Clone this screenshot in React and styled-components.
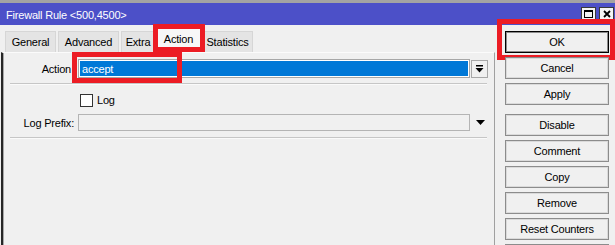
import styled, { createGlobalStyle } from 'styled-components';

const GlobalStyle = createGlobalStyle`
  html, body {
    margin: 0;
    padding: 0;
    background: #f0f0f0;
  }
  body {
    font-family: "Liberation Sans", Arial, sans-serif;
    font-size: 11px;
    letter-spacing: -0.2px;
    color: #000;
  }
`;

const markRed = '#ec1c24';

const Window = styled.div`
  width: 615px;
  height: 245px;
  overflow: hidden;
  display: flex;
  flex-direction: column;
  background: #f0f0f0;
  border-top: 3px solid #a3a3a3;
  box-sizing: border-box;
`;

const TitleBar = styled.div`
  height: 22px;
  flex-shrink: 0;
  display: flex;
  align-items: center;
  justify-content: space-between;
  padding: 0 1px 0 6px;
  background: #4c50c8;
  color: #fff;
`;

const Title = styled.div`
  font-size: 11px;
  padding-top: 2px;
`;

const Controls = styled.div`
  display: flex;
  gap: 3px;
  align-self: flex-start;
  margin-top: 4px;
`;

const CtlButton = styled.div`
  width: 13px;
  height: 12px;
  display: flex;
  align-items: center;
  justify-content: center;
  background: #f4f4f4;
  border: 1px solid #3a3a3a;
`;

const Body = styled.div`
  flex: 1;
  display: flex;
  padding-left: 1px;
  min-height: 0;
`;

const Main = styled.div`
  width: 494px;
  display: flex;
  flex-direction: column;
`;

const TabStrip = styled.div`
  height: 27px;
  flex-shrink: 0;
  display: flex;
  align-items: flex-end;
  gap: 2px;
  padding-left: 4px;
`;

const Tab = styled.div`
  position: relative;
  box-sizing: border-box;
  width: ${(p) => p.$w}px;
  height: ${(p) => (p.$active ? 25 : 21)}px;
  margin: ${(p) => (p.$active ? '0 -2px' : '0')};
  z-index: ${(p) => (p.$active ? 2 : 1)};
  display: flex;
  align-items: center;
  justify-content: center;
  padding-bottom: ${(p) => (p.$active ? 3 : 0)}px;
  background: ${(p) => (p.$active ? '#f7f7f7' : '#e4e4e4')};
  border: 1px solid #d6d6d6;
  border-bottom: none;

  ${(p) =>
    p.$marked &&
    `
    &::after {
      content: '';
      position: absolute;
      top: -4px;
      left: -3px;
      right: -4px;
      bottom: 0;
      border: 5px solid ${markRed};
      pointer-events: none;
    }
  `}
`;

const Panel = styled.div`
  flex: 1;
  display: flex;
  flex-direction: column;
  padding-top: 6px;
  border-top: 1px solid #fbfbfb;
  border-left: 2px solid #262626;
  border-right: 1px solid #a0a0a0;
  box-shadow: inset 1px 0 0 #a8a8a8;
`;

const Row = styled.div`
  display: flex;
  align-items: center;
  height: ${(p) => p.$h}px;
  margin-top: ${(p) => p.$mt || 0}px;
`;

const Label = styled.div`
  width: 71px;
  flex-shrink: 0;
  text-align: right;
  padding-right: ${(p) => p.$pr || 0}px;
  box-sizing: border-box;
  margin-right: 4px;
  white-space: nowrap;
`;

const SelectBox = styled.div`
  position: relative;
  box-sizing: border-box;
  width: 392px;
  height: 19px;
  padding: 1px;
  background: #fff;
  border: 1px solid #a7a7a7;

  &::after {
    content: '';
    position: absolute;
    top: -8px;
    left: -7px;
    width: 110px;
    height: 31px;
    box-sizing: border-box;
    border: 5px solid ${markRed};
    pointer-events: none;
  }
`;

const Selected = styled.div`
  height: 100%;
  display: flex;
  align-items: center;
  padding-left: 2px;
  background: #0078d7;
  color: #fff;
  font-size: 11px;
`;

const DropButton = styled.div`
  box-sizing: border-box;
  width: 17px;
  height: 18px;
  margin-left: 1px;
  display: flex;
  align-items: center;
  justify-content: center;
  background: #f0f0f0;
  border: 1px solid #a7a7a7;
`;

const TextInput = styled.div`
  box-sizing: border-box;
  width: 392px;
  height: 17px;
  background: #f0f0f0;
  border: 1px solid #b4b4b4;
`;

const Arrow = styled.div`
  margin-left: 6px;
  display: flex;
`;

const Separator = styled.div`
  height: 1px;
  margin: ${(p) => p.$mt}px 7px 0 7px;
  background: #c6c6c6;
  border-bottom: 1px solid #fafafa;
`;

const Check = styled.div`
  box-sizing: border-box;
  width: 13px;
  height: 13px;
  margin-left: 2px;
  background: #fff;
  border: 1px solid #333;
`;

const CheckLabel = styled.span`
  margin-left: 4px;
`;

const Side = styled.div`
  flex: 1;
  display: flex;
  flex-direction: column;
  gap: 4px;
  padding: 6px 6px 0 10px;
`;

const Button = styled.div`
  position: relative;
  box-sizing: border-box;
  flex-shrink: 0;
  height: 22px;
  margin-top: ${(p) => p.$mt || 0}px;
  display: flex;
  align-items: center;
  justify-content: center;
  background: #f0f0f0;
  border: 1px solid ${(p) => (p.$default ? '#000' : '#8c8c8c')};
  box-shadow: inset 0 0 0 1px ${(p) => (p.$default ? '#8c8c8c' : '#dadada')};

  ${(p) =>
    p.$marked &&
    `
    &::after {
      content: '';
      position: absolute;
      top: -13px;
      left: -9px;
      right: -7px;
      bottom: -8px;
      border: 5px solid ${markRed};
      pointer-events: none;
    }
  `}
`;

const tabs = [
  { name: 'General', w: 51 },
  { name: 'Advanced', w: 61 },
  { name: 'Extra', w: 34 },
  { name: 'Action', w: 47, active: true },
  { name: 'Statistics', w: 51 },
];

// last button is mostly below the window edge, only its top border shows
const buttons = [
  { name: 'OK', isDefault: true, marked: true },
  { name: 'Cancel' },
  { name: 'Apply' },
  { name: 'Disable', mt: 5 },
  { name: 'Comment' },
  { name: 'Copy' },
  { name: 'Remove' },
  { name: 'Reset Counters' },
  { name: '' },
];

const App = () => {
  return (
    <>
      <GlobalStyle />
      <Window>
        <TitleBar>
          <Title>Firewall Rule &lt;500,4500&gt;</Title>
          <Controls>
            <CtlButton>
              <svg width="9" height="8" viewBox="0 0 9 8">
                <rect x="0.5" y="0.5" width="8" height="7" fill="none" stroke="#000" />
                <rect x="0" y="0" width="9" height="2" fill="#000" />
              </svg>
            </CtlButton>
            <CtlButton>
              <svg width="8" height="8" viewBox="0 0 8 8">
                <path d="M1 1 L7 7 M7 1 L1 7" stroke="#000" strokeWidth="1.8" />
              </svg>
            </CtlButton>
          </Controls>
        </TitleBar>
        <Body>
          <Main>
            <TabStrip>
              {tabs.map((tab) => (
                <Tab
                  key={tab.name}
                  $w={tab.w}
                  $active={tab.active}
                  $marked={tab.active}
                >
                  {tab.name}
                </Tab>
              ))}
            </TabStrip>
            <Panel>
              <Row $h={19}>
                <Label $pr={3}>Action</Label>
                <SelectBox>
                  <Selected>accept</Selected>
                </SelectBox>
                <DropButton>
                  <svg width="9" height="8" viewBox="0 0 9 8">
                    <rect x="1" y="0" width="7" height="1.5" fill="#000" />
                    <path d="M0.5 3 L8.5 3 L4.5 7.5 Z" fill="#000" />
                  </svg>
                </DropButton>
              </Row>
              <Separator $mt={5} />
              <Row $h={16} $mt={7}>
                <Label />
                <Check />
                <CheckLabel>Log</CheckLabel>
              </Row>
              <Row $h={17} $mt={6}>
                <Label>Log Prefix:</Label>
                <TextInput />
                <Arrow>
                  <svg width="9" height="5" viewBox="0 0 9 5">
                    <path d="M0 0 L9 0 L4.5 5 Z" fill="#000" />
                  </svg>
                </Arrow>
              </Row>
              <Separator $mt={6} />
            </Panel>
          </Main>
          <Side>
            {buttons.map((b, i) => (
              <Button
                key={i}
                $default={b.isDefault}
                $marked={b.marked}
                $mt={b.mt}
              >
                {b.name}
              </Button>
            ))}
          </Side>
        </Body>
      </Window>
    </>
  );
};

export default App;
